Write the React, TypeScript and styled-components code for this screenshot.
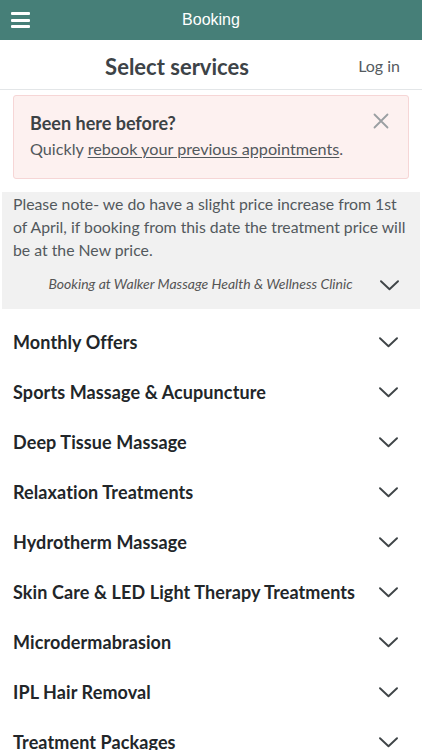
import React from "react";
import styled, { createGlobalStyle } from "styled-components";

const Global = createGlobalStyle`
  html, body { margin: 0; padding: 0; background: #fff; }
  body { font-family: Lato, "Open Sans", sans-serif; color: #333; overflow: hidden; }
  * { box-sizing: border-box; }
`;

const Page = styled.div`
  width: 422px;
  height: 750px;
  overflow: hidden;
  background: #fff;
`;

const TopBar = styled.header`
  height: 40px;
  background: #467f78;
  display: flex;
  align-items: center;
  justify-content: center;
  position: relative;
`;

const TopTitle = styled.div`
  font-family: "Liberation Sans", Arial, sans-serif;
  font-size: 16px;
  color: #fff;
`;

const Burger = styled.button`
  position: absolute;
  left: 11px;
  top: 12px;
  width: 19px;
  height: 16px;
  padding: 0;
  border: 0;
  background: none;
  display: flex;
  flex-direction: column;
  justify-content: space-between;
  span {
    display: block;
    height: 3px;
    background: #fff;
    border-radius: 1px;
  }
`;

const SubHeader = styled.div`
  height: 50px;
  border-bottom: 1px solid #e3e6e8;
  display: flex;
  align-items: center;
  justify-content: center;
  position: relative;
  padding-top: 3px;
`;

const PageTitle = styled.h1`
  margin: 0 0 0 -68px;
  font-size: 22px;
  font-weight: 700;
  color: #3d4347;
`;

const LoginLink = styled.a`
  position: absolute;
  right: 22px;
  top: 16px;
  font-size: 16px;
  color: #555b5f;
`;

const Alert = styled.div`
  margin: 5px 13px 0;
  height: 84px;
  background: #fdf1f0;
  border: 1px solid #f6d6d6;
  border-radius: 3px;
  padding: 16px 16px 0 16px;
  position: relative;
`;

const AlertTitle = styled.div`
  font-size: 18px;
  font-weight: 700;
  color: #3c4245;
  line-height: 22px;
`;

const AlertText = styled.div`
  margin-top: 4px;
  font-size: 16.2px;
  color: #52585c;
  line-height: 22px;
  a { color: #52585c; text-decoration: underline; text-underline-offset: 2px; }
`;

const Close = styled.svg`
  position: absolute;
  right: 19px;
  top: 17px;
`;

const Notice = styled.div`
  margin: 13px 2px 0;
  background: #f1f1f1;
  padding: 0 10px 0 11px;
  height: 117px;
`;

const NoticeText = styled.p`
  margin: 0;
  font-size: 15.8px;
  line-height: 23px;
  color: #53595d;
`;

const ClinicRow = styled.div`
  display: flex;
  align-items: center;
  margin-top: 10px;
  height: 28px;
  padding-right: 11px;
`;

const ClinicName = styled.div`
  flex: 1;
  text-align: center;
  font-style: italic;
  font-size: 14px;
  color: #555;
  padding-left: 8px;
  padding-bottom: 4px;
`;

const List = styled.div`
  padding-top: 8px;
`;

const Row = styled.div`
  height: 50px;
  display: flex;
  align-items: center;
  padding: 0 24px 0 13px;
`;

const RowLabel = styled.div`
  flex: 1;
  font-size: 18px;
  font-weight: 700;
  color: #222629;
  letter-spacing: 0.1px;
`;

const Chevron = ({ color = "#3f4447" }: { color?: string }) => (
  <svg width="19" height="11" viewBox="0 0 19 11" fill="none">
    <path d="M1 1.2 L9.5 9.3 L18 1.2" stroke={color} strokeWidth="1.9" strokeLinecap="round" strokeLinejoin="round" />
  </svg>
);

const items = [
  "Monthly Offers",
  "Sports Massage & Acupuncture",
  "Deep Tissue Massage",
  "Relaxation Treatments",
  "Hydrotherm Massage",
  "Skin Care & LED Light Therapy Treatments",
  "Microdermabrasion",
  "IPL Hair Removal",
  "Treatment Packages",
];

export default function App() {
  return (
    <Page>
      <Global />
      <TopBar>
        <Burger aria-label="menu">
          <span />
          <span />
          <span />
        </Burger>
        <TopTitle>Booking</TopTitle>
      </TopBar>
      <SubHeader>
        <PageTitle>Select services</PageTitle>
        <LoginLink>Log in</LoginLink>
      </SubHeader>
      <Alert>
        <AlertTitle>Been here before?</AlertTitle>
        <AlertText>
          Quickly <a>rebook your previous appointments</a>.
        </AlertText>
        <Close width="16" height="16" viewBox="0 0 16 16">
          <path d="M1.5 1.5 L14.5 14.5 M14.5 1.5 L1.5 14.5" stroke="#9a9fa2" strokeWidth="1.8" strokeLinecap="round" />
        </Close>
      </Alert>
      <Notice>
        <NoticeText>
          Please note- we do have a slight price increase from 1st of April, if booking from this date the treatment price will be at the New price.
        </NoticeText>
        <ClinicRow>
          <ClinicName>Booking at Walker Massage Health &amp; Wellness Clinic</ClinicName>
          <Chevron />
        </ClinicRow>
      </Notice>
      <List>
        {items.map((t) => (
          <Row key={t}>
            <RowLabel>{t}</RowLabel>
            <Chevron />
          </Row>
        ))}
      </List>
    </Page>
  );
}
